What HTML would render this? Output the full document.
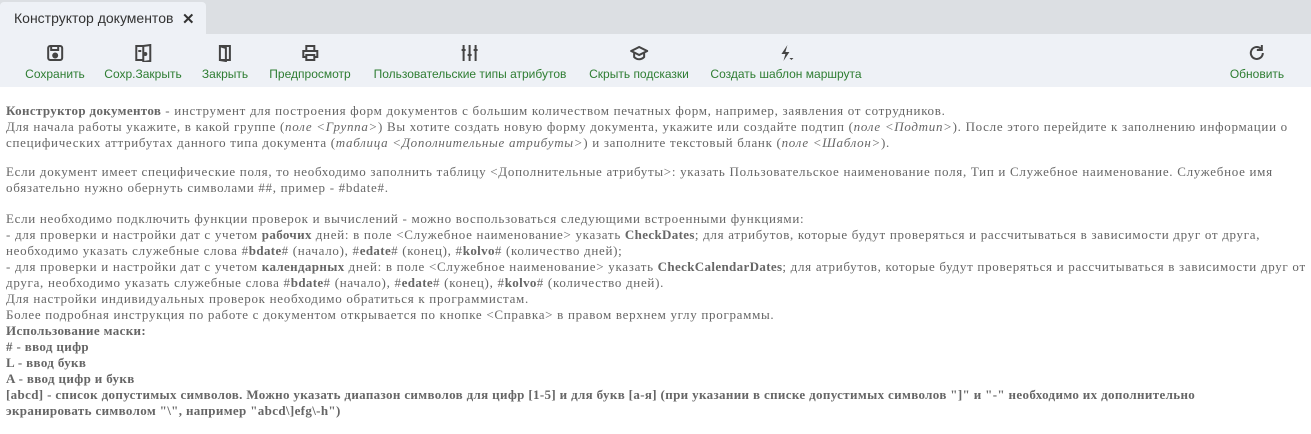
<!DOCTYPE html>
<html><head><meta charset="utf-8"><style>
*{margin:0;padding:0;box-sizing:border-box}
body{width:1311px;height:434px;background:#fff;position:relative;overflow:hidden;font-family:"Liberation Sans",sans-serif}
.tabbar{position:absolute;left:0;top:0;width:1311px;height:34px;background:#dcdfe3}
.tab{position:absolute;left:0;top:2px;width:206px;height:32px;background:#eef1f6;border-radius:4px 4px 0 0;font-size:14px;color:#333;padding:8px 0 0 14px}
.tab .x{position:absolute;left:182px;top:8px;font-size:15px;font-weight:bold;color:#333}
.tb{position:absolute;left:0;top:34px;width:1311px;height:53px;background:#eef1f6}
.it{position:absolute;top:0;text-align:center;transform:translateX(-50%);white-space:nowrap}
.it svg{display:block;margin:10px auto 0;width:18px;height:18px}
.it span{display:block;font-size:12px;color:#2e7d32;margin-top:5px}
.txt{position:absolute;left:6px;font-family:"Liberation Serif",serif;font-size:13px;color:#666;white-space:nowrap;letter-spacing:0.7px}
.txt b{color:#666;letter-spacing:0.35px}
.bl{letter-spacing:0.35px}
</style></head><body>
<div class="tabbar"><div class="tab">Конструктор документов<span class="x">✕</span></div></div>
<div class="tb">
<div class="it" style="left:55px"><svg viewBox="0 0 18 18" fill="none" stroke="#444" stroke-width="2"><rect x="2" y="2" width="14" height="14" rx="2"/><path d="M5 2v4h7V2"/><circle cx="9" cy="11.5" r="2" fill="#444"/></svg><span>Сохранить</span></div>
<div class="it" style="left:143px"><svg viewBox="0 0 18 18" fill="none" stroke="#444" stroke-width="2"><path d="M9 2H2v14h7M9 2l7 -1v16l-7 1z"/><path d="M4 6h3v2H4z" fill="#444" stroke="none"/><circle cx="11" cy="10" r="1" fill="#444"/></svg><span>Сохр.Закрыть</span></div>
<div class="it" style="left:225px"><svg viewBox="0 0 18 18" fill="none" stroke="#444" stroke-width="2"><path d="M4 2h10v14H4zM4 2l6 2v13l-6-1"/></svg><span>Закрыть</span></div>
<div class="it" style="left:310px"><svg viewBox="0 0 18 18" fill="none" stroke="#444" stroke-width="2"><path d="M5 6V2h8v4M5 13H2V7h14v6h-3M5 11h8v5H5z"/></svg><span>Предпросмотр</span></div>
<div class="it" style="left:470px"><svg viewBox="0 0 18 18" fill="none" stroke="#444" stroke-width="2"><path d="M3 1v16M9 1v16M15 1v16M1 6h4M7 11h4M13 6h4"/></svg><span>Пользовательские типы атрибутов</span></div>
<div class="it" style="left:639px"><svg viewBox="0 0 18 18" fill="none" stroke="#444" stroke-width="2"><path d="M1 7l8-4 8 4-8 4zM4 9v4c3 3 7 3 10 0V9"/></svg><span>Скрыть подсказки</span></div>
<div class="it" style="left:786px"><svg viewBox="0 0 18 18" fill="#444"><path d="M10 1L4 10h4l-2 7 6-9H8z"/><path d="M12 14h4l-2 2z"/></svg><span>Создать шаблон маршрута</span></div>
<div class="it" style="left:1257px"><svg viewBox="0 0 18 18" fill="none" stroke="#444" stroke-width="2"><path d="M15 9a6 6 0 1 1-2-4.5"/><path d="M14 1v5h-5" fill="none"/></svg><span>Обновить</span></div>
</div>
<div class="txt" style="top:103px"><b>Конструктор документов</b> - инструмент для построения форм документов с большим количеством печатных форм, например, заявления от сотрудников.</div>
<div class="txt" style="top:119px">Для начала работы укажите, в какой группе (<i>поле &lt;Группа&gt;</i>) Вы хотите создать новую форму документа, укажите или создайте подтип (<i>поле &lt;Подтип&gt;</i>). После этого перейдите к заполнению информации о</div>
<div class="txt" style="top:135px">специфических аттрибутах данного типа документа (<i>таблица &lt;Дополнительные атрибуты&gt;</i>) и заполните текстовый бланк (<i>поле &lt;Шаблон&gt;</i>).</div>
<div class="txt" style="top:164px">Если документ имеет специфические поля, то необходимо заполнить таблицу &lt;Дополнительные атрибуты&gt;: указать Пользовательское наименование поля, Тип и Служебное наименование. Служебное имя</div>
<div class="txt" style="top:180px">обязательно нужно обернуть символами ##, пример - #bdate#.</div>
<div class="txt" style="top:211px">Если необходимо подключить функции проверок и вычислений - можно воспользоваться следующими встроенными функциями:</div>
<div class="txt" style="top:227px">- для проверки и настройки дат с учетом <b>рабочих</b> дней: в поле &lt;Служебное наименование&gt; указать <b>CheckDates</b>; для атрибутов, которые будут проверяться и рассчитываться в зависимости друг от друга,</div>
<div class="txt" style="top:243px">необходимо указать служебные слова #<b>bdate</b># (начало), #<b>edate</b># (конец), #<b>kolvo</b># (количество дней);</div>
<div class="txt" style="top:259px">- для проверки и настройки дат с учетом <b>календарных</b> дней: в поле &lt;Служебное наименование&gt; указать <b>CheckCalendarDates</b>; для атрибутов, которые будут проверяться и рассчитываться в зависимости друг от</div>
<div class="txt" style="top:275px">друга, необходимо указать служебные слова #<b>bdate</b># (начало), #<b>edate</b># (конец), #<b>kolvo</b># (количество дней).</div>
<div class="txt" style="top:291px">Для настройки индивидуальных проверок необходимо обратиться к программистам.</div>
<div class="txt" style="top:307px">Более подробная инструкция по работе с документом открывается по кнопке &lt;Справка&gt; в правом верхнем углу программы.</div>
<div class="txt bl" style="top:323px"><b>Использование маски:</b></div>
<div class="txt bl" style="top:339px"><b># - ввод цифр</b></div>
<div class="txt bl" style="top:355px"><b>L - ввод букв</b></div>
<div class="txt bl" style="top:371px"><b>A - ввод цифр и букв</b></div>
<div class="txt bl" style="top:387px"><b>[abcd] - список допустимых символов. Можно указать диапазон символов для цифр [1-5] и для букв [а-я] (при указании в списке допустимых символов "]" и "-" необходимо их дополнительно</b></div>
<div class="txt bl" style="top:403px"><b>экранировать символом "\", например "abcd\]efg\-h")</b></div>
</body></html>
